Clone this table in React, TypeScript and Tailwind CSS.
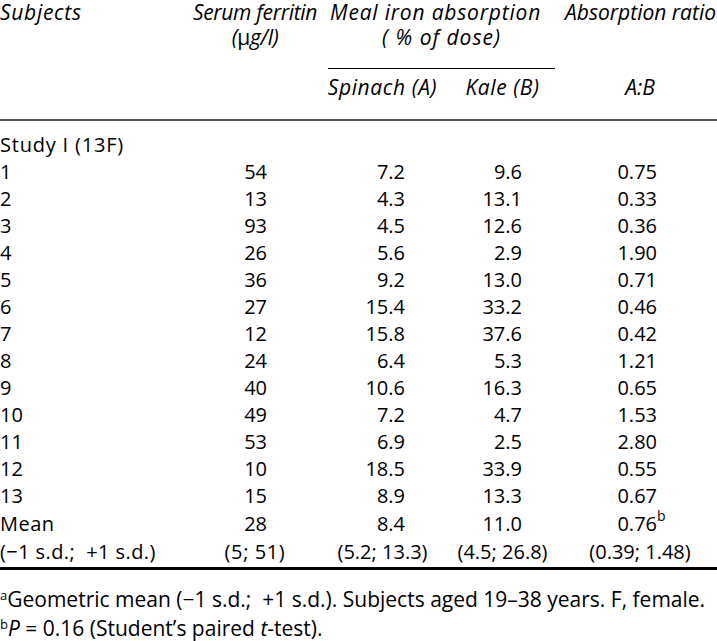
import React from 'react'

const rows: [string, string, string, string, string][] = [
  ['1', '54', '7.2', '9.6', '0.75'],
  ['2', '13', '4.3', '13.1', '0.33'],
  ['3', '93', '4.5', '12.6', '0.36'],
  ['4', '26', '5.6', '2.9', '1.90'],
  ['5', '36', '9.2', '13.0', '0.71'],
  ['6', '27', '15.4', '33.2', '0.46'],
  ['7', '12', '15.8', '37.6', '0.42'],
  ['8', '24', '6.4', '5.3', '1.21'],
  ['9', '40', '10.6', '16.3', '0.65'],
  ['10', '49', '7.2', '4.7', '1.53'],
  ['11', '53', '6.9', '2.5', '2.80'],
  ['12', '10', '18.5', '33.9', '0.55'],
  ['13', '15', '8.9', '13.3', '0.67'],
]

const grid = 'grid grid-cols-[190px_130px_125px_115px_160px]'

export default function App() {
  return (
    <div
      className="w-[717px] h-[641px] overflow-hidden bg-white text-black text-[20px]"
      style={{ fontFamily: '"Open Sans", "Noto Sans", sans-serif' }}
    >
      <div className="w-[720px]">
        {/* header */}
        <div className={`${grid} italic text-[21px] leading-[25px] whitespace-nowrap`}>
          <div className="tracking-[0.7px]">Subjects</div>
          <div className="text-center tracking-[-0.3px]">
            Serum ferritin
            <br />
            (<span className="not-italic">μ</span>g/l)
          </div>
          <div className="col-span-2 text-center">
            <div className="pl-[10px] pr-[20px] tracking-[0.8px]">Meal iron absorption</div>
            <div className="pl-[8px] pr-[5px] tracking-[1px]">( % of dose)</div>
          </div>
          <div className="pl-[5px]">Absorption ratio</div>
        </div>
        <div className={`${grid} mt-[18px]`}>
          <div className="col-start-3 col-span-2 ml-[8px] mr-[5px] border-t border-black" />
        </div>
        <div className={`${grid} italic text-[21px] leading-[25px] tracking-[0.6px] mt-[6px] whitespace-nowrap`}>
          <div className="col-start-3 text-center">Spinach (A)</div>
          <div className="text-center">Kale (B)</div>
          <div className="text-center tracking-normal">A:B</div>
        </div>
        <div className="mt-[19px] border-t-2 border-[#555]" />

        {/* body */}
        <div className="pt-[10px] leading-[27px] whitespace-nowrap">
          <div className="tracking-[0.8px]">Study I (13F)</div>
          {rows.map((r) => (
            <div key={r[0]} className={grid}>
              <div>{r[0]}</div>
              <div className="text-right pr-[53px]">{r[1]}</div>
              <div className="text-right pr-[40px]">{r[2]}</div>
              <div className="text-right pr-[38px]">{r[3]}</div>
              <div className="text-right pr-[63px]">{r[4]}</div>
            </div>
          ))}
          <div className={`${grid} pt-[1px]`}>
            <div className="tracking-[0.5px]">Mean</div>
            <div className="text-right pr-[53px]">28</div>
            <div className="text-right pr-[40px]">8.4</div>
            <div className="text-right pr-[38px]">11.0</div>
            <div className="text-right pr-[63px]">
              <span className="relative">
                0.76
                <span className="absolute left-full top-[-1px] text-[14px] leading-none">b</span>
              </span>
            </div>
          </div>
          <div className={`${grid} pt-[1px]`}>
            <div className="tracking-[0.4px]">(−1 s.d.;&nbsp;&nbsp;+1 s.d.)</div>
            <div className="text-center tracking-[0.6px]">(5; 51)</div>
            <div className="text-center">(5.2; 13.3)</div>
            <div className="text-center">(4.5; 26.8)</div>
            <div className="text-center">(0.39; 1.48)</div>
          </div>
        </div>
        <div className="mt-[2px] border-t-[3px] border-black" />

        {/* footnotes */}
        <div className="pt-[16px] text-[21px] leading-[26px] whitespace-nowrap">
          <div>
            <span className="relative -top-[7px] text-[13px]">a</span>Geometric mean (−1 s.d.;&nbsp; +1 s.d.). Subjects aged 19–38 years. F, female.
          </div>
          <div>
            <span className="relative -top-[7px] text-[13px]">b</span>
            <span className="italic">P</span> = 0.16 (Student’s paired <span className="italic">t</span>-test).
          </div>
        </div>
      </div>
    </div>
  )
}
